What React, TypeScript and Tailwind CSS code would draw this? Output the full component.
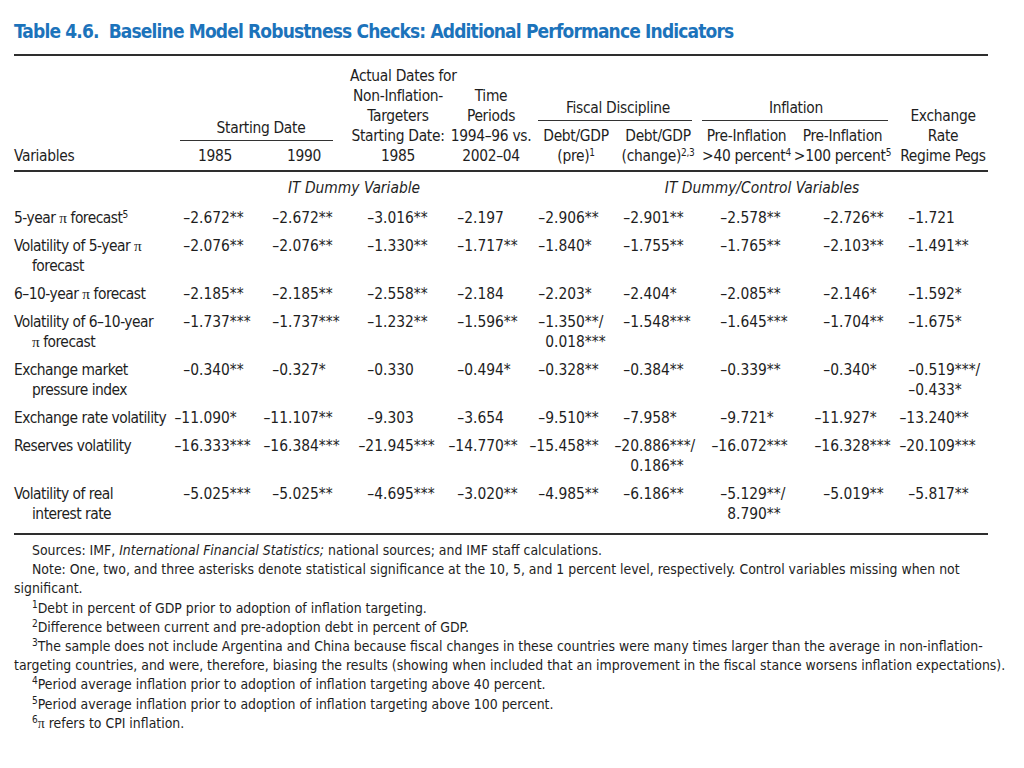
import * as React from "react";

const FONT = "font-['DejaVu_Sans_Condensed','Liberation_Sans',sans-serif]";
const COLS = "grid grid-cols-[158px_86px_92px_96px_90px_80px_84px_93px_99px_96px]";

// width of the integer part box per data column, so decimals line up
const INT_W = [
  "w-[27px]",
  "w-[30px]",
  "w-[33px]",
  "w-[27px]",
  "w-[18px]",
  "w-[23px]",
  "w-[36px]",
  "w-[46px]",
  "w-[32px]",
];

const Pi = () => <span className="font-['Liberation_Serif',serif]">π</span>;

type Row = {
  label: React.ReactNode[];
  values: string[][];
  pt: string;
};

const rows: Row[] = [
  {
    label: [
      <>
        5-year <Pi /> forecast<sup className="text-[10px]">5</sup>
      </>,
    ],
    values: [["–2.672**"], ["–2.672**"], ["–3.016**"], ["–2.197"], ["–2.906**"], ["–2.901**"], ["–2.578**"], ["–2.726**"], ["–1.721"]],
    pt: "pt-[10px]",
  },
  {
    label: [
      <>
        Volatility of 5-year <Pi />
      </>,
      "forecast",
    ],
    values: [["–2.076**"], ["–2.076**"], ["–1.330**"], ["–1.717**"], ["–1.840*"], ["–1.755**"], ["–1.765**"], ["–2.103**"], ["–1.491**"]],
    pt: "pt-[8px]",
  },
  {
    label: [
      <>
        6–10-year <Pi /> forecast
      </>,
    ],
    values: [["–2.185**"], ["–2.185**"], ["–2.558**"], ["–2.184"], ["–2.203*"], ["–2.404*"], ["–2.085**"], ["–2.146*"], ["–1.592*"]],
    pt: "pt-[8px]",
  },
  {
    label: [
      "Volatility of 6–10-year",
      <>
        <Pi /> forecast
      </>,
    ],
    values: [
      ["–1.737***"],
      ["–1.737***"],
      ["–1.232**"],
      ["–1.596**"],
      ["–1.350**/", "0.018***"],
      ["–1.548***"],
      ["–1.645***"],
      ["–1.704**"],
      ["–1.675*"],
    ],
    pt: "pt-[8px]",
  },
  {
    label: ["Exchange market", "pressure index"],
    values: [
      ["–0.340**"],
      ["–0.327*"],
      ["–0.330"],
      ["–0.494*"],
      ["–0.328**"],
      ["–0.384**"],
      ["–0.339**"],
      ["–0.340*"],
      ["–0.519***/", "–0.433*"],
    ],
    pt: "pt-[8px]",
  },
  {
    label: ["Exchange rate volatility"],
    values: [["–11.090*"], ["–11.107**"], ["–9.303"], ["–3.654"], ["–9.510**"], ["–7.958*"], ["–9.721*"], ["–11.927*"], ["–13.240**"]],
    pt: "pt-[8px]",
  },
  {
    label: ["Reserves volatility"],
    values: [
      ["–16.333***"],
      ["–16.384***"],
      ["–21.945***"],
      ["–14.770**"],
      ["–15.458**"],
      ["–20.886***/", "0.186**"],
      ["–16.072***"],
      ["–16.328***"],
      ["–20.109***"],
    ],
    pt: "pt-[8px]",
  },
  {
    label: ["Volatility of real", "interest rate"],
    values: [
      ["–5.025***"],
      ["–5.025**"],
      ["–4.695***"],
      ["–3.020**"],
      ["–4.985**"],
      ["–6.186**"],
      ["–5.129**/", "8.790**"],
      ["–5.019**"],
      ["–5.817**"],
    ],
    pt: "pt-[8px]",
  },
];

function Num({ value, width }: { value: string; width: string }) {
  const dot = value.indexOf(".");
  return (
    <div className="flex whitespace-nowrap">
      <span className={`flex shrink-0 justify-end ${width}`}>{value.slice(0, dot)}</span>
      <span>{value.slice(dot)}</span>
    </div>
  );
}

function Lines({ lines }: { lines: React.ReactNode[] }) {
  return (
    <>
      {lines.map((line, i) => (
        <div key={i} className="whitespace-nowrap">
          {line}
        </div>
      ))}
    </>
  );
}

function Group({
  title,
  ruleClass,
  widths,
  subs,
}: {
  title: string;
  ruleClass: string;
  widths: string;
  subs: React.ReactNode[][];
}) {
  return (
    <div className="col-span-2">
      <div className="whitespace-nowrap">{title}</div>
      <div className={`mt-[2px] h-[1.5px] bg-[#333] ${ruleClass}`} />
      <div className={`mt-[5px] grid ${widths}`}>
        {subs.map((lines, i) => (
          <div key={i}>
            <Lines lines={lines} />
          </div>
        ))}
      </div>
    </div>
  );
}

const sup = "text-[10px]";

export default function App() {
  return (
    <div className={`min-h-[768px] bg-white text-[#1e1e1e] ${FONT}`}>
      <div className="ml-[14px] w-[974px] pt-[19px]">
        <h1 className="text-[19px] font-bold leading-[24px] tracking-[-0.85px] text-[#1c73bb]">
          <span className="mr-[10px]">Table 4.6.</span>
          Baseline Model Robustness Checks: Additional Performance Indicators
        </h1>

        <div className="mt-[11px] h-[2px] bg-[#2e2e2e]" />

        <div className="text-[15.4px] leading-[20px]">
          {/* header */}
          <div className={`${COLS} items-end pt-[10px] pb-[4px] text-center tracking-[-0.3px]`}>
            <div className="text-left">Variables</div>
            <Group
              title="Starting Date"
              ruleClass="ml-[8px] mr-[17px]"
              widths="grid-cols-[86px_92px]"
              subs={[["1985"], ["1990"]]}
            />
            <div>
              <Lines lines={["Actual Dates for", "Non-Inflation-", "Targeters", "Starting Date:", "1985"]} />
            </div>
            <div>
              <Lines lines={["Time", "Periods", "1994–96 vs.", "2002–04"]} />
            </div>
            <Group
              title="Fiscal Discipline"
              ruleClass="ml-[2px] mr-[8px]"
              widths="grid-cols-[80px_84px]"
              subs={[
                [
                  "Debt/GDP",
                  <>
                    (pre)<sup className={sup}>1</sup>
                  </>,
                ],
                [
                  "Debt/GDP",
                  <>
                    (change)<sup className={sup}>2,3</sup>
                  </>,
                ],
              ]}
            />
            <Group
              title="Inflation"
              ruleClass="ml-[2px] mr-[4px]"
              widths="grid-cols-[93px_99px]"
              subs={[
                [
                  "Pre-Inflation",
                  <>
                    &gt;40 percent<sup className={sup}>4</sup>
                  </>,
                ],
                [
                  "Pre-Inflation",
                  <>
                    &gt;100 percent<sup className={sup}>5</sup>
                  </>,
                ],
              ]}
            />
            <div className="pl-[6px]">
              <Lines lines={["Exchange", "Rate", "Regime Pegs"]} />
            </div>
          </div>

          <div className="h-[2px] bg-[#2e2e2e]" />

          {/* section labels */}
          <div className={`${COLS} pt-[6px] text-center italic`}>
            <div />
            <div className="col-span-4">IT Dummy Variable</div>
            <div className="col-span-5">IT Dummy/Control Variables</div>
          </div>

          {rows.map((row, r) => (
            <div key={r} className={`${COLS} ${row.pt}`}>
              <div className="tracking-[-0.5px]">
                {row.label.map((line, i) => (
                  <div key={i} className={i > 0 ? "whitespace-nowrap pl-[18px]" : "whitespace-nowrap"}>
                    {line}
                  </div>
                ))}
              </div>
              {row.values.map((cell, c) => (
                <div key={c}>
                  {cell.map((v, i) => (
                    <Num key={i} value={v} width={INT_W[c]} />
                  ))}
                </div>
              ))}
            </div>
          ))}

          <div className="mt-[9px] h-[2px] bg-[#2e2e2e]" />
        </div>

        {/* notes */}
        <div className="mt-[6px] text-[13.9px] leading-[19.2px]">
          <div className="whitespace-nowrap pl-[18px]">
            Sources: IMF, <i>International Financial Statistics;</i> national sources; and IMF staff calculations.
          </div>
          <div className="whitespace-nowrap pl-[18px]">
            Note: One, two, and three asterisks denote statistical significance at the 10, 5, and 1 percent level,
            respectively. Control variables missing when not
          </div>
          <div className="whitespace-nowrap">significant.</div>
          <div className="whitespace-nowrap pl-[18px]">
            <sup className={sup}>1</sup>Debt in percent of GDP prior to adoption of inflation targeting.
          </div>
          <div className="whitespace-nowrap pl-[18px]">
            <sup className={sup}>2</sup>Difference between current and pre-adoption debt in percent of GDP.
          </div>
          <div className="whitespace-nowrap pl-[18px]">
            <sup className={sup}>3</sup>The sample does not include Argentina and China because fiscal changes in these
            countries were many times larger than the average in non-inflation-
          </div>
          <div className="whitespace-nowrap">
            targeting countries, and were, therefore, biasing the results (showing when included that an improvement in
            the fiscal stance worsens inflation expectations).
          </div>
          <div className="whitespace-nowrap pl-[18px]">
            <sup className={sup}>4</sup>Period average inflation prior to adoption of inflation targeting above 40 percent.
          </div>
          <div className="whitespace-nowrap pl-[18px]">
            <sup className={sup}>5</sup>Period average inflation prior to adoption of inflation targeting above 100
            percent.
          </div>
          <div className="whitespace-nowrap pl-[18px]">
            <sup className={sup}>6</sup>
            <Pi /> refers to CPI inflation.
          </div>
        </div>
      </div>
    </div>
  );
}
